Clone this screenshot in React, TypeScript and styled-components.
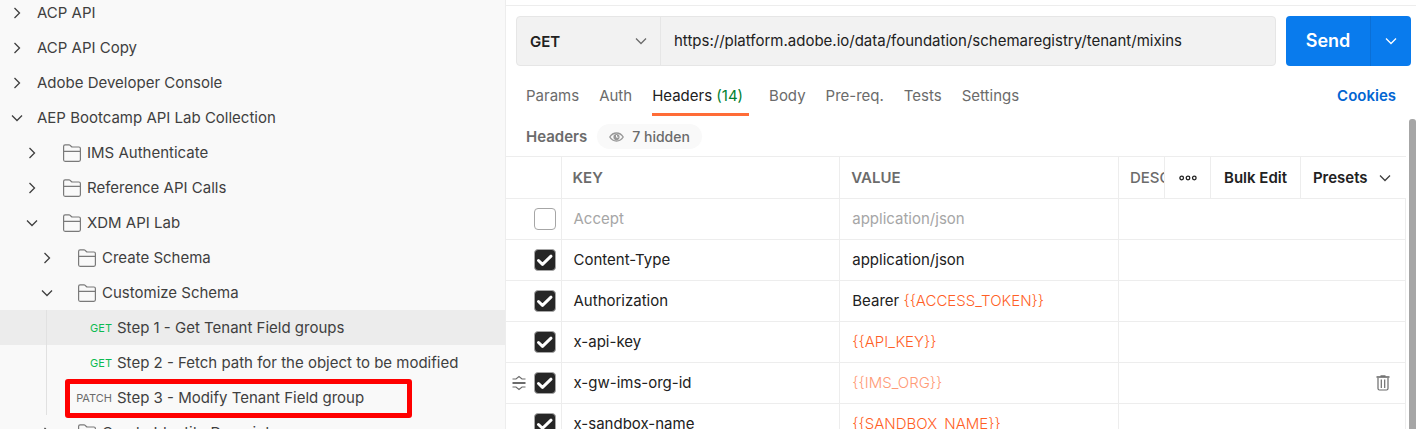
import React from "react";
import styled, { createGlobalStyle, css } from "styled-components";

const GlobalStyle = createGlobalStyle`
  *, *::before, *::after { box-sizing: border-box; }
  body {
    margin: 0;
    background: #fff;
    color: #212121;
    font-family: Inter, "Liberation Sans", sans-serif;
    font-size: 15px;
    line-height: 20px;
  }
  button, input, select { font: inherit; color: inherit; }
`;

const line = "#ededed";

const Page = styled.div`
  display: flex;
  height: 100vh;
  overflow: hidden;
`;

/* ---------- Sidebar ---------- */

const Sidebar = styled.nav`
  flex: 0 0 506px;
  background: #f9f9f9;
  border-right: 1px solid ${line};
  overflow: hidden;
`;

const Tree = styled.ul`
  list-style: none;
  margin: -5px 0 0;
  padding: 0;
`;

const TreeItem = styled.li<{ $guide?: boolean }>`
  position: relative;
  ${({ $guide }) =>
    $guide &&
    css`
      &::before {
        content: "";
        position: absolute;
        left: 46px;
        top: 0;
        bottom: 0;
        width: 1px;
        background: #e1e1e1;
      }
    `}
`;

const TreeRow = styled.button<{ $level: number; $active?: boolean }>`
  display: flex;
  align-items: center;
  width: 100%;
  height: 35px;
  border: 0;
  padding: 0 0 0 ${({ $level }) => 8 + $level * 15}px;
  background: ${({ $active }) => ($active ? "#ececec" : "transparent")};
  color: #3f3f3f;
  text-align: left;
  white-space: nowrap;
  cursor: pointer;
`;

const TreeLabel = styled.span<{ $gap: number }>`
  margin-left: ${({ $gap }) => $gap}px;
`;

const FolderSlot = styled.span`
  display: flex;
  margin-left: 21px;
`;

const Method = styled.span<{ $get: boolean }>`
  flex: 0 0 59px;
  font-size: 11px;
  text-align: right;
  color: ${({ $get }) => ($get ? "#0cbb52" : "#6b6b6b")};
`;

const Callout = styled.span`
  position: absolute;
  left: 65px;
  top: -1px;
  width: 347px;
  height: 39px;
  border: 5px solid #ff0000;
  border-radius: 3px;
  pointer-events: none;
`;

/* ---------- Request panel ---------- */

const Main = styled.main`
  flex: 1;
  min-width: 0;
  display: flex;
  flex-direction: column;
`;

const TopEdge = styled.div`
  flex: none;
  height: 6px;
  border-bottom: 1px solid ${line};
`;

const RequestBar = styled.form`
  display: flex;
  flex: none;
  gap: 10px;
  height: 50px;
  margin: 10px 5px 0 10px;
`;

const UrlGroup = styled.div`
  display: flex;
  flex: 1;
  min-width: 0;
  background: #f2f2f2;
  border: 1px solid #e6e6e6;
  border-radius: 4px;
  overflow: hidden;
`;

const MethodPicker = styled.label`
  display: grid;
  flex: 0 0 144px;
  align-items: center;
  border-right: 1px solid #e6e6e6;

  > * { grid-area: 1 / 1; }
  > svg { justify-self: end; margin-right: 10px; pointer-events: none; }
`;

const MethodSelect = styled.select`
  appearance: none;
  width: 100%;
  height: 100%;
  border: 0;
  padding: 2px 13px 0;
  background: transparent;
  font-weight: 600;
`;

const UrlInput = styled.input`
  flex: 1;
  min-width: 0;
  border: 0;
  padding: 0 13px;
  background: transparent;
  outline: 0;
`;

const SendGroup = styled.div`
  display: flex;
  flex: 0 0 125px;
  border-radius: 4px;
  overflow: hidden;
  background: #097bed;
  color: #fff;
`;

const SendButton = styled.button`
  flex: 1;
  border: 0;
  padding: 0;
  background: transparent;
  font-size: 18px;
  font-weight: 600;
`;

const SendMore = styled.button`
  display: flex;
  align-items: center;
  justify-content: center;
  flex: 0 0 41px;
  border: 0;
  border-left: 1px solid #0a6fd6;
  padding: 0;
  background: transparent;
`;

const Tabs = styled.div`
  display: flex;
  flex: none;
  align-items: flex-start;
  gap: 20px;
  height: 50px;
  padding: 0 20px;

  > a { margin-left: auto; }
`;

const Tab = styled.button<{ $active?: boolean }>`
  height: 50px;
  border: 0;
  border-bottom: 3px solid ${({ $active }) => ($active ? "#ff6c37" : "transparent")};
  padding: 20px 0 7px;
  background: transparent;
  color: ${({ $active }) => ($active ? "#212121" : "#6b6b6b")};
  white-space: nowrap;
`;

const Count = styled.span`
  margin-right: 6px;
  color: #007f31;
`;

const CookiesLink = styled.a`
  padding-top: 20px;
  color: #0265d2;
  font-weight: 600;
  text-decoration: none;
`;

const HeadersArea = styled.section`
  display: flex;
  flex: 1;
  min-height: 0;
`;

const HeadersContent = styled.div`
  flex: 1;
  min-width: 0;
  overflow: hidden;
`;

const SubHeader = styled.div`
  display: flex;
  align-items: center;
  gap: 10px;
  height: 40px;
  padding: 1px 20px 0;
`;

const SubTitle = styled.h2`
  margin: 0;
  font-size: 15px;
  font-weight: 600;
  color: #6b6b6b;
`;

const HiddenPill = styled.button`
  display: flex;
  align-items: center;
  gap: 8px;
  height: 25px;
  border: 0;
  border-radius: 13px;
  padding: 0 12px;
  background: #f9f9f9;
  color: #6b6b6b;
  font-size: 14px;
  font-weight: 500;
`;

const HeadersTable = styled.table`
  table-layout: fixed;
  width: 100%;
  border-collapse: collapse;
`;

const Col = styled.col<{ $w?: number }>`
  width: ${({ $w }) => ($w ? `${$w}px` : "auto")};
`;

const HeadCell = styled.th<{ $flush?: boolean }>`
  height: 42px;
  border: 1px solid ${line};
  border-left: 0;
  padding: ${({ $flush }) => ($flush ? "0" : "0 0 0 11px")};
  overflow: hidden;
  color: #6b6b6b;
  font-weight: 600;
  text-align: left;
  white-space: nowrap;

  &:last-child { border-right: 0; }
`;

const ClippedLabel = styled.span`
  display: block;
  overflow: hidden;
  font-weight: 500;
`;

const HeadButton = styled.button`
  display: flex;
  align-items: center;
  justify-content: center;
  gap: 8px;
  width: 100%;
  height: 40px;
  border: 0;
  padding: 0;
  background: transparent;
  color: #212121;
  font-weight: 600;
  white-space: nowrap;
`;

const Cell = styled.td<{ $muted?: boolean }>`
  height: 41px;
  border: 1px solid ${line};
  border-left: 0;
  padding: 0 0 0 12px;
  color: ${({ $muted }) => ($muted ? "#a6a6a6" : "#212121")};
  white-space: nowrap;
`;

const Controls = styled.div`
  display: flex;
  align-items: center;
  justify-content: flex-end;
  gap: 8px;
  padding-right: 5px;
  margin-left: -12px;
`;

const CheckWrap = styled.label`
  display: grid;
  place-items: center;

  > * { grid-area: 1 / 1; }
  > svg { pointer-events: none; }
`;

const CheckInput = styled.input`
  appearance: none;
  width: 22px;
  height: 22px;
  margin: 0;
  border: 1px solid #a6a6a6;
  border-radius: 4px;
  background: #fff;

  &:checked { background: #262626; }
`;

const Variable = styled.span<{ $faded?: boolean }>`
  color: ${({ $faded }) => ($faded ? "#ff9a76" : "#ff5f26")};
  font-weight: 300;
`;

const DeleteButton = styled.button`
  display: flex;
  margin-left: auto;
  margin-right: 15px;
  border: 0;
  padding: 0;
  background: transparent;
`;

const ScrollTrack = styled.div`
  flex: 0 0 10px;
  padding: 3px 0 0 3px;
`;

const ScrollThumb = styled.div`
  height: 100%;
  background: #a6a6a6;
  border-radius: 3px 3px 0 0;
`;

/* ---------- Icons ---------- */

const Chevron = ({ open, color = "#3f3f3f" }: { open: boolean; color?: string }) => (
  <svg width="18" height="18" viewBox="0 0 18 18" fill="none" stroke={color} strokeWidth="1.3" aria-hidden="true">
    <path d={open ? "M4 6.5 9 11.5 14 6.5" : "M6.5 4 11.5 9 6.5 14"} />
  </svg>
);

const Folder = () => (
  <svg width="20" height="20" viewBox="0 0 20 20" fill="none" stroke="#7a7a7a" strokeWidth="1.2" aria-hidden="true">
    <path d="M1.6 16.8V3.4Q1.6 1.9 3.1 1.9H7Q7.700 1.9 8.2 2.4L9.300 3.5Q9.800 4 10.500 4H16.900Q18.400 4 18.400 5.500V16.800Q18.400 18.300 16.900 18.300H3.100Q1.600 18.300 1.600 16.800ZM1.600 8.300H18.400" />
  </svg>
);

const Eye = () => (
  <svg width="15" height="12" viewBox="0 0 15 12" fill="none" aria-hidden="true">
    <path d="M.8 6Q3.3 2 7.5 2T14.2 6Q11.7 10 7.5 10T.8 6Z" stroke="#989898" strokeWidth="1.4" />
    <circle cx="7.5" cy="6" r="3.1" fill="#989898" />
    <path d="M7.5 4V6.2H9.3" stroke="#f9f9f9" strokeWidth="1" />
  </svg>
);

const Tick = () => (
  <svg width="22" height="22" viewBox="0 0 22 22" fill="none" stroke="#fff" strokeWidth="3" strokeLinecap="round" strokeLinejoin="round" aria-hidden="true">
    <path d="M4.5 11.5 8.5 15.3 17 7.2" />
  </svg>
);

const Drag = () => (
  <svg width="14" height="16" viewBox="0 0 14 16" fill="none" stroke="#6b6b6b" aria-hidden="true">
    <path d="M.5 4H4L7 1.6 10 4H13.5M.5 12H4L7 14.4 10 12H13.5" strokeWidth="1.2" />
    <path d="M.5 8H13.5" strokeWidth="2" />
  </svg>
);

const Trash = () => (
  <svg width="14" height="16" viewBox="0 0 14 16" fill="none" stroke="#6b6b6b" aria-hidden="true">
    <path d="M.5 2H13.5" strokeWidth="1.6" />
    <path d="M4.5 1H9.5" strokeWidth="1.4" />
    <path d="M2 3V13.5Q2 15 3.5 15H10.500Q12 15 12 13.500V3M5.300 4.500V13M8.700 4.500V13" strokeWidth="1.2" />
  </svg>
);

const Dots = () => (
  <svg width="18" height="6" viewBox="0 0 18 6" fill="none" stroke="#212121" strokeWidth="1.3" aria-hidden="true">
    <circle cx="2.7" cy="3" r="1.8" />
    <circle cx="9" cy="3" r="1.8" />
    <circle cx="15.3" cy="3" r="1.8" />
  </svg>
);

/* ---------- Data ---------- */

type Node = {
  label: string;
  level: number;
  open?: boolean;
  method?: string;
  active?: boolean;
  callout?: boolean;
};

const nodes: Node[] = [
  { label: "ACP API", level: 0 },
  { label: "ACP API Copy", level: 0 },
  { label: "Adobe Developer Console", level: 0 },
  { label: "AEP Bootcamp API Lab Collection", level: 0, open: true },
  { label: "IMS Authenticate", level: 1 },
  { label: "Reference API Calls", level: 1 },
  { label: "XDM API Lab", level: 1, open: true },
  { label: "Create Schema", level: 2 },
  { label: "Customize Schema", level: 2, open: true },
  { label: "Step 1 - Get Tenant Field groups", level: 3, method: "GET", active: true },
  { label: "Step 2 - Fetch path for the object to be modified", level: 3, method: "GET" },
  { label: "Step 3 - Modify Tenant Field group", level: 3, method: "PATCH", callout: true },
  { label: "Create Identity Descriptor", level: 2 },
];

type Header = {
  name: string;
  text?: string;
  variable?: string;
  disabled?: boolean;
  hovered?: boolean;
};

const headers: Header[] = [
  { name: "Accept", text: "application/json", disabled: true },
  { name: "Content-Type", text: "application/json" },
  { name: "Authorization", text: "Bearer ", variable: "{{ACCESS_TOKEN}}" },
  { name: "x-api-key", variable: "{{API_KEY}}" },
  { name: "x-gw-ims-org-id", variable: "{{IMS_ORG}}", hovered: true },
  { name: "x-sandbox-name", variable: "{{SANDBOX_NAME}}" },
];

const TreeNode = ({ node }: { node: Node }) => (
  <TreeItem $guide={!!node.method}>
    <TreeRow type="button" $level={node.level} $active={node.active}>
      {node.method ? (
        <Method $get={node.method === "GET"}>{node.method}</Method>
      ) : (
        <Chevron open={!!node.open} />
      )}
      {!node.method && node.level > 0 && (
        <FolderSlot>
          <Folder />
        </FolderSlot>
      )}
      <TreeLabel $gap={node.level === 0 ? 11 : 5}>{node.label}</TreeLabel>
    </TreeRow>
    {node.callout && <Callout />}
  </TreeItem>
);

export default function App() {
  return (
    <>
      <GlobalStyle />
      <Page>
        <Sidebar aria-label="Collections">
          <Tree>
            {nodes.map((node) => (
              <TreeNode key={node.label} node={node} />
            ))}
          </Tree>
        </Sidebar>

        <Main>
          <TopEdge />
          <RequestBar onSubmit={(e) => e.preventDefault()}>
            <UrlGroup>
              <MethodPicker>
                <MethodSelect aria-label="Method" defaultValue="GET">
                  <option>GET</option>
                  <option>POST</option>
                  <option>PATCH</option>
                </MethodSelect>
                <Chevron open color="#6b6b6b" />
              </MethodPicker>
              <UrlInput
                aria-label="Request URL"
                defaultValue="https://platform.adobe.io/data/foundation/schemaregistry/tenant/mixins"
              />
            </UrlGroup>
            <SendGroup>
              <SendButton type="submit">Send</SendButton>
              <SendMore type="button" aria-label="Send options">
                <Chevron open color="#fff" />
              </SendMore>
            </SendGroup>
          </RequestBar>

          <Tabs>
            <Tab>Params</Tab>
            <Tab>Auth</Tab>
            <Tab $active>
              Headers <Count>(14)</Count>
            </Tab>
            <Tab>Body</Tab>
            <Tab>Pre-req.</Tab>
            <Tab>Tests</Tab>
            <Tab>Settings</Tab>
            <CookiesLink href="#cookies">Cookies</CookiesLink>
          </Tabs>

          <HeadersArea>
            <HeadersContent>
              <SubHeader>
                <SubTitle>Headers</SubTitle>
                <HiddenPill type="button">
                  <Eye />7 hidden
                </HiddenPill>
              </SubHeader>
              <HeadersTable>
                <colgroup>
                  <Col $w={55} />
                  <Col />
                  <Col />
                  <Col $w={46} />
                  <Col $w={46} />
                  <Col $w={90} />
                  <Col $w={105} />
                </colgroup>
                <thead>
                  <tr>
                    <HeadCell aria-label="Enabled" />
                    <HeadCell>KEY</HeadCell>
                    <HeadCell>VALUE</HeadCell>
                    <HeadCell>
                      <ClippedLabel>DESCRIPTION</ClippedLabel>
                    </HeadCell>
                    <HeadCell $flush>
                      <HeadButton type="button" aria-label="More columns">
                        <Dots />
                      </HeadButton>
                    </HeadCell>
                    <HeadCell $flush>
                      <HeadButton type="button">Bulk Edit</HeadButton>
                    </HeadCell>
                    <HeadCell $flush>
                      <HeadButton type="button">
                        Presets
                        <Chevron open />
                      </HeadButton>
                    </HeadCell>
                  </tr>
                </thead>
                <tbody>
                  {headers.map((h) => (
                    <tr key={h.name}>
                      <Cell>
                        <Controls>
                          {h.hovered && <Drag />}
                          <CheckWrap>
                            <CheckInput type="checkbox" aria-label={h.name} defaultChecked={!h.disabled} />
                            {!h.disabled && <Tick />}
                          </CheckWrap>
                        </Controls>
                      </Cell>
                      <Cell $muted={h.disabled}>{h.name}</Cell>
                      <Cell $muted={h.disabled}>
                        {h.text}
                        {h.variable && <Variable $faded={h.hovered}>{h.variable}</Variable>}
                      </Cell>
                      <Cell colSpan={4}>
                        {h.hovered && (
                          <DeleteButton type="button" aria-label={`Delete ${h.name}`}>
                            <Trash />
                          </DeleteButton>
                        )}
                      </Cell>
                    </tr>
                  ))}
                </tbody>
              </HeadersTable>
            </HeadersContent>
            <ScrollTrack>
              <ScrollThumb />
            </ScrollTrack>
          </HeadersArea>
        </Main>
      </Page>
    </>
  );
}
